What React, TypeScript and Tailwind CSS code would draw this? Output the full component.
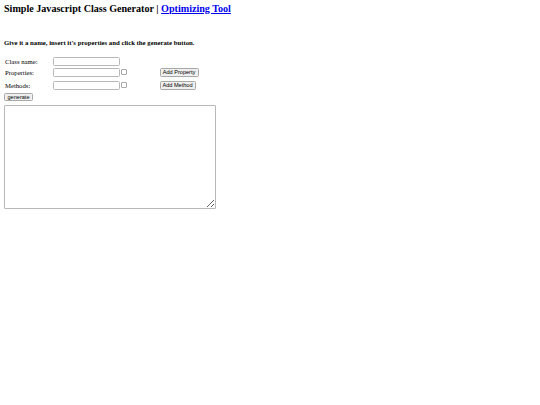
import React from "react";

export default function App() {
  const serif = { fontFamily: '"Liberation Serif", "Times New Roman", serif' };
  const sans = { fontFamily: '"Liberation Sans", Arial, sans-serif' };
  return (
    <div className="w-[540px] h-[405px] bg-white text-black pl-1 pt-[2.5px]" style={serif}>
      <div className="h-[12px] leading-[12px] text-[10.1px] font-bold whitespace-nowrap">
        Simple Javascript Class Generator |{" "}
        <a href="#" className="text-[#0000ee] underline">Optimizing Tool</a>
      </div>
      <div className="mt-[24.5px] h-[8px] leading-[8px] text-[6.75px] font-bold whitespace-nowrap">
        Give it a name, insert it's properties and click the generate button.
      </div>
      <div className="mt-[10px] flex flex-col">
        <div className="flex h-[9px] items-start">
          <div className="w-[48.5px] text-[6.7px] leading-[9px] pl-[1px]">Class name:</div>
          <input className="w-[67px] h-[9px] border border-[#b8b8b8] rounded-[1.5px] outline-none" />
        </div>
        <div className="flex h-[9px] items-start mt-[2px]">
          <div className="w-[48.5px] text-[6.7px] leading-[9px] pl-[1px]">Properties:</div>
          <input className="w-[67px] h-[9px] border border-[#b8b8b8] rounded-[1.5px] outline-none" />
          <div className="ml-[1.5px] mt-[1px] w-[6px] h-[6px] border border-[#a8a8a8] rounded-[1px]" />
          <button className="ml-[32.5px] h-[9px] w-[39px] border border-[#a8a8a8] bg-[#efefef] rounded-[1.5px] text-[5.6px] leading-[7px] text-black" style={sans}>
            Add Property
          </button>
        </div>
        <div className="flex h-[9px] items-start mt-[4px]">
          <div className="w-[48.5px] text-[6.7px] leading-[9px] pl-[1px]">Methods:</div>
          <input className="w-[67px] h-[9px] border border-[#b8b8b8] rounded-[1.5px] outline-none" />
          <div className="ml-[1.5px] mt-[1px] w-[6px] h-[6px] border border-[#a8a8a8] rounded-[1px]" />
          <button className="ml-[32.5px] h-[8.5px] w-[36px] border border-[#a8a8a8] bg-[#efefef] rounded-[1.5px] text-[5.6px] leading-[7px] text-black" style={sans}>
            Add Method
          </button>
        </div>
      </div>
      <button className="mt-[3px] block h-[8px] w-[29px] border border-[#a8a8a8] bg-[#efefef] rounded-[1.5px] text-[5.6px] leading-[6px] text-black" style={sans}>
        generate
      </button>
      <textarea className="mt-[4px] block w-[212px] h-[104px] border border-[#b8b8b8] rounded-[1px] outline-none resize" />
    </div>
  );
}
